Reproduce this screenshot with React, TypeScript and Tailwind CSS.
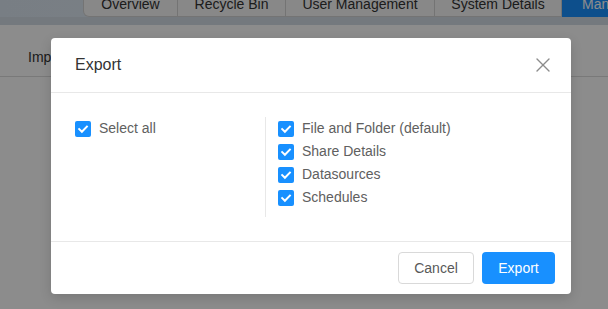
import { X } from "lucide-react";

const tabs = [
  { label: "Overview", width: "w-[95px]" },
  { label: "Recycle Bin", width: "w-[108px]" },
  { label: "User Management", width: "w-[149px]" },
  { label: "System Details", width: "w-[127px]" },
];

const options = ["File and Folder (default)", "Share Details", "Datasources", "Schedules"];

function Check({ label }: { label: string }) {
  return (
    <label className="flex h-[23px] items-center gap-2 text-[14px] text-[#606060]">
      <span className="flex h-4 w-4 items-center justify-center rounded-[2px] bg-[#1890ff]">
        <svg width="16" height="16" viewBox="0 0 16 16" fill="none">
          <path d="M4.2 8.1 6.9 10.8 11.9 5.6" stroke="white" strokeWidth="2" strokeLinecap="square" />
        </svg>
      </span>
      <span>{label}</span>
    </label>
  );
}

export default function App() {
  return (
    <div className="relative h-[309px] w-[608px] overflow-hidden bg-white font-['Liberation_Sans',Arial,sans-serif]">
      {/* page underneath */}
      <div className="flex h-[17px] bg-gradient-to-r from-[#dbe6f1] to-[#e6eef6]">
        <div className="ml-[83px] flex">
          {tabs.map((t, i) => (
            <div
              key={t.label}
              className={`flex ${t.width} justify-center overflow-hidden border-b border-r border-[#d4d4d4] bg-[#f7f7f7] text-[14px] leading-[14px] text-[#333] ${
                i === 0 ? "rounded-bl-[6px] border-l" : ""
              }`}
            >
              <span className="-mt-[3px]">{t.label}</span>
            </div>
          ))}
          <div className="flex w-[60px] overflow-hidden bg-[#1890ff] pl-[20px] text-[14px] leading-[14px] text-white">
            <span className="-mt-[3px] whitespace-nowrap">Manage</span>
          </div>
        </div>
      </div>
      <div className="h-[8px] bg-[#d3dde6]" />
      <div className="h-[52px] border-b border-[#dcdcdc] bg-white pl-[28px] pt-[24px] text-[14px] leading-[16px] text-[#333]">
        Import
      </div>

      {/* mask */}
      <div className="absolute inset-0 bg-black/45" />

      {/* modal */}
      <div className="absolute left-[51px] top-[38px] w-[520px] rounded bg-white shadow-[0_4px_12px_rgba(0,0,0,0.15)]">
        <div className="flex h-[55px] items-center justify-between border-b border-[#e8e8e8] pl-6">
          <span className="text-[16px] text-[#333]">Export</span>
          <button className="flex h-[54px] w-[56px] items-center justify-center text-[#8c8c8c]">
            <X size={24} strokeWidth={1.4} />
          </button>
        </div>

        <div className="flex p-6">
          <div className="h-[100px] w-[191px] border-r border-[#e8e8e8]">
            <Check label="Select all" />
          </div>
          <div className="flex flex-col pl-3">
            {options.map((o) => (
              <Check key={o} label={o} />
            ))}
          </div>
        </div>

        <div className="flex justify-end gap-2 border-t border-[#e8e8e8] px-4 py-[10px]">
          <button className="h-8 w-[76px] rounded border border-[#d9d9d9] bg-white text-[14px] text-[#595959]">
            Cancel
          </button>
          <button className="h-8 w-[73px] rounded bg-[#1890ff] text-[14px] text-white">Export</button>
        </div>
      </div>
    </div>
  );
}
